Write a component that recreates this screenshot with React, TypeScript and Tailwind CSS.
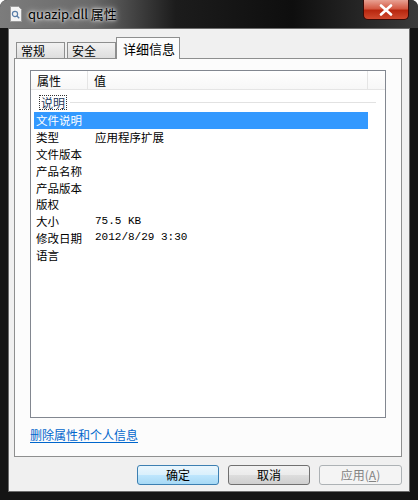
import React from 'react';

const ROWS: { label: string; value?: string; mono?: boolean }[] = [
  { label: '文件说明' },
  { label: '类型', value: '应用程序扩展' },
  { label: '文件版本' },
  { label: '产品名称' },
  { label: '产品版本' },
  { label: '版权' },
  { label: '大小', value: '75.5 KB', mono: true },
  { label: '修改日期', value: '2012/8/29 3:30', mono: true },
  { label: '语言' },
];

const FONT = "font-['Noto_Sans_CJK_SC',sans-serif]";
const MONO = "font-['Liberation_Mono','Noto_Sans_CJK_SC',monospace]";

const FileIcon = () => (
  <svg width="14" height="16" viewBox="0 0 14 16">
    <path d="M1.5 0.5h8l3 3v12h-11z" fill="#f4f4f4" stroke="#9a9a9a" />
    <circle cx="6" cy="8" r="2.6" fill="none" stroke="#5b7fa8" strokeWidth="1.2" />
    <path d="M7.8 9.8l2.4 2.4" stroke="#5b7fa8" strokeWidth="1.4" />
  </svg>
);

export default function App() {
  return (
    <div
      className={`w-[418px] h-[500px] flex flex-col bg-[#141414] rounded-t-[7px] overflow-hidden ${FONT}`}
    >
      {/* 标题栏 */}
      <div className="h-[28px] flex items-start bg-[linear-gradient(90deg,#7c7c7c_0%,#6a6a6a_22%,#1c1c1c_42%,#0e0e0e_70%,#3a3a3a_100%)]">
        <div className="flex items-center h-[28px] pl-[9px] gap-[5px]">
          <FileIcon />
          <span className="text-[13px] text-black [text-shadow:0_0_6px_#ffffff,0_0_3px_#ffffff]">
            quazip.dll 属性
          </span>
        </div>
        <div className="ml-auto mr-[9px] w-[46px] h-[20px] rounded-b-[5px] border border-t-0 border-[#3a0a06] bg-[linear-gradient(180deg,#e8a193_0%,#d45a44_45%,#b8270f_55%,#d0492e_100%)] flex items-center justify-center">
          <svg width="14" height="12" viewBox="0 0 14 12">
            <path
              d="M2 1.5l10 9M12 1.5l-10 9"
              stroke="#ffffff"
              strokeWidth="2.6"
              strokeLinecap="round"
            />
          </svg>
        </div>
      </div>

      {/* 客户区 */}
      <div className="flex-1 mx-[8px] mb-[8px] bg-[#f0f0f0] border border-[#6b6b6b] flex flex-col px-[5px] pt-[7px]">
        {/* 选项卡 */}
        <div className="flex items-end h-[22px] pl-[2px] text-[12px] leading-[14px] text-black">
          <div className="w-[49px] h-[17px] -mb-px border border-[#8e8f8f] border-b-0 bg-[linear-gradient(180deg,#f2f2f2,#dcdcdc)] flex items-center pl-[4px]">
            常规
          </div>
          <div className="w-[49px] h-[17px] ml-[2px] -mb-px border border-[#8e8f8f] border-b-0 bg-[linear-gradient(180deg,#f2f2f2,#dcdcdc)] flex items-center pl-[4px]">
            安全
          </div>
          <div className="relative z-10 w-[64px] h-[22px] -mb-px border border-[#8e8f8f] border-b-0 bg-[#fcfcfc] flex items-center pl-[6px] text-[13px]">
            详细信息
          </div>
        </div>

        {/* 选项卡面板 */}
        <div className="h-[399px] mr-[2px] border border-[#8e8f8f] bg-[#fcfcfc] flex flex-col px-[15px] pt-[11px]">
          {/* 列表 */}
          <div className="h-[348px] border border-[#828790] bg-white flex flex-col text-[12px] leading-[15px] text-black">
            <div className="h-[19px] flex border-b border-[#e5e5e5] bg-[linear-gradient(180deg,#ffffff,#f7f7f7)]">
              <div className="w-[57px] pl-[6px] flex items-center border-r border-[#e5e5e5]">
                属性
              </div>
              <div className="w-[280px] pl-[6px] flex items-center border-r border-[#e5e5e5]">
                值
              </div>
            </div>

            <div className="h-[19px] mt-[3px] flex items-center pl-[8px] pr-[9px]">
              <span className="border border-dotted border-[#333] px-[1px] leading-[13px] text-[#1e395b]">
                说明
              </span>
              <div className="flex-1 h-px ml-[3px] bg-[#e2e2e2]" />
            </div>

            <div className="pl-[3px]">
              {ROWS.map((row, i) => (
                <div
                  key={row.label}
                  className={`h-[16.8px] w-[334px] flex items-center ${
                    i === 0 ? 'bg-[#3399ff] text-white' : ''
                  }`}
                >
                  <span className="w-[61px] pl-[2px] text-[11.5px] leading-[14px]">
                    {row.label}
                  </span>
                  {row.value && (
                    <span
                      className={
                        row.mono
                          ? `${MONO} text-[11px] leading-[13px]`
                          : 'text-[11.5px] leading-[14px]'
                      }
                    >
                      {row.value}
                    </span>
                  )}
                </div>
              ))}
            </div>
          </div>

          <a className="mt-[9px] w-fit text-[12px] leading-[15px] text-[#0066cc] underline underline-offset-2 cursor-pointer">
            删除属性和个人信息
          </a>
        </div>

        {/* 按钮 */}
        <div className="flex justify-end gap-[9px] mt-[8px] mr-[2px] text-[12px] leading-[14px]">
          <button className="w-[82px] h-[20px] rounded-[3px] border border-[#3c7fb1] bg-[linear-gradient(180deg,#eaf6fd_0%,#d9f0fc_50%,#bee6fd_51%,#a7d9f5_100%)] text-black">
            确定
          </button>
          <button className="w-[82px] h-[20px] rounded-[3px] border border-[#707070] bg-[linear-gradient(180deg,#f2f2f2_0%,#ebebeb_50%,#dddddd_51%,#cfcfcf_100%)] text-black">
            取消
          </button>
          <button className="w-[83px] h-[20px] rounded-[3px] border border-[#adb2b5] bg-[#f4f4f4] text-[#838383]">
            应用(<span className="underline">A</span>)
          </button>
        </div>
      </div>
    </div>
  );
}
